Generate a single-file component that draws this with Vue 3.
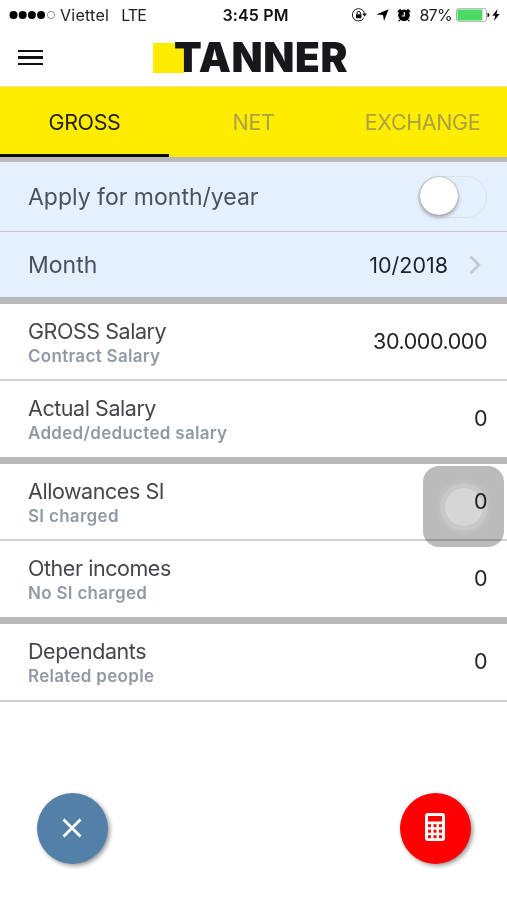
<template>
    <div class="screen">
        <div class="status">
            <div class="carrier">
                <svg class="signal" width="48" height="10" viewBox="0 0 48 10">
                    <circle v-for="n in 4" :key="n" :cx="n * 9.2 - 4.7" cy="5" r="4" fill="#000" />
                    <circle cx="42" cy="5" r="3.6" fill="none" stroke="#777" stroke-width=".8" />
                </svg>
                <span class="viettel">Viettel</span>
                <span class="lte">LTE</span>
            </div>
            <span class="time">3:45 PM</span>
            <div class="indicators">
                <svg width="17" height="16" viewBox="0 0 17 16">
                    <path d="M12.6 11.4A6.2 6.2 0 1 1 13.6 6.5" fill="none" stroke="#222" stroke-width="1" />
                    <path d="M11 6.5h5l-2.5 3z" fill="#111" />
                    <rect x="5" y="7.2" width="5.4" height="4" fill="#111" />
                    <path d="M6 7.5V6a1.7 1.7 0 0 1 3.4 0v1.5" fill="none" stroke="#111" stroke-width="1" />
                </svg>
                <svg class="arrow" width="13" height="12" viewBox="0 0 13 12">
                    <path d="M12.6.2 8 12 7 6 .4 5.6z" fill="#000" />
                </svg>
                <svg class="alarm" width="14" height="14" viewBox="0 0 14 14">
                    <circle cx="7" cy="7.3" r="5.8" fill="#000" />
                    <path d="M1 4 3.8 1.5M13 4 10.2 1.5M2.7 12 1.7 13M11.3 12l1 1" stroke="#000" stroke-width="1.7" />
                    <path d="M7.3 4v4H4.6" fill="none" stroke="#fff" stroke-width="1.2" />
                </svg>
                <span class="percent">87%</span>
                <svg class="battery" width="34" height="14" viewBox="0 0 34 14">
                    <rect x=".5" y=".7" width="30" height="12.6" rx="2" fill="#fff" stroke="#999" stroke-width=".8" />
                    <rect x="1.4" y="1.6" width="25" height="10.8" rx="1" fill="#4cd964" />
                    <path d="M31.5 4.7q2 .3 2 2.3t-2 2.3z" fill="#111" />
                </svg>
                <svg class="bolt" width="8" height="12" viewBox="0 0 8 12">
                    <path d="M5.6 0 .4 6.7h2.9L1.9 12l5.7-7H4.5z" fill="#000" />
                </svg>
            </div>
        </div>

        <header class="header">
            <button class="menu" aria-label="Menu">
                <span></span>
                <span></span>
                <span></span>
            </button>
            <div class="logo">TANNER</div>
        </header>

        <nav class="tabs">
            <button v-for="tab in tabs" :key="tab" class="tab" :class="{ active: tab === current }" @click="current = tab">
                {{ tab }}
            </button>
        </nav>

        <section class="period">
            <div class="row apply">
                <span class="caption">Apply for month/year</span>
                <button class="toggle" :class="{ on: applied }" aria-label="Apply" @click="applied = !applied">
                    <span class="knob"></span>
                </button>
            </div>
            <div class="row month">
                <span class="caption">Month</span>
                <span class="date">10/2018</span>
                <svg class="chevron" width="12" height="20" viewBox="0 0 12 20">
                    <path d="M1.5 1.5 10 10l-8.5 8.5" fill="none" stroke="#c3c8cd" stroke-width="2.6" />
                </svg>
            </div>
        </section>

        <section v-for="(group, i) in groups" :key="i" class="group">
            <div v-for="item in group" :key="item.title" class="row item">
                <div class="label">
                    <div class="title">{{ item.title }}</div>
                    <div class="sub">{{ item.sub }}</div>
                </div>
                <div class="value">{{ item.value }}</div>
            </div>
        </section>

        <div class="assistive"><span></span></div>

        <footer class="actions">
            <button class="fab clear" aria-label="Clear">
                <svg width="20" height="20" viewBox="0 0 20 20">
                    <path d="M1.5 1.5l17 17M18.5 1.5l-17 17" stroke="#fff" stroke-width="2.7" />
                </svg>
            </button>
            <button class="fab calc" aria-label="Calculate">
                <svg width="20" height="28" viewBox="0 0 20 28">
                    <rect width="20" height="28" rx="3" fill="#fff" />
                    <rect x="3" y="3" width="14" height="5.5" fill="#f00" />
                    <template v-for="y in 3" :key="y">
                        <rect v-for="x in 3" :key="x" :x="x * 5.5 - 2.5" :y="y * 5.5 + 5.7" width="3" height="3" fill="#f00" />
                    </template>
                </svg>
            </button>
        </footer>
    </div>
</template>

<script setup>
    import { ref } from 'vue';

    const tabs = ['GROSS', 'NET', 'EXCHANGE'];
    const current = ref('GROSS');
    const applied = ref(false);

    const groups = [
        [
            { title: 'GROSS Salary', sub: 'Contract Salary', value: '30.000.000' },
            { title: 'Actual Salary', sub: 'Added/deducted salary', value: '0' },
        ],
        [
            { title: 'Allowances SI', sub: 'SI charged', value: '0' },
            { title: 'Other incomes', sub: 'No SI charged', value: '0' },
        ],
        [
            { title: 'Dependants', sub: 'Related people', value: '0' },
        ],
    ];
</script>

<style>
    body {
        margin: 0;
        background: #fff;
    }
</style>

<style scoped>
    .screen {
        position: relative;
        display: flex;
        flex-direction: column;
        width: 507px;
        height: 900px;
        overflow: hidden;
        background: #fff;
        font-family: Inter, 'Liberation Sans', sans-serif;
        color: #222;
    }

    button {
        padding: 0;
        border: none;
        background: none;
        font-family: inherit;
        cursor: pointer;
    }

    svg {
        display: block;
        flex: none;
    }

    .status {
        display: grid;
        grid-template-columns: 1fr auto 1fr;
        align-items: center;
        height: 30px;
        padding: 0 7px 0 9px;
        font-size: 16px;
        white-space: nowrap;
    }

    .carrier,
    .indicators {
        display: flex;
        align-items: center;
    }

    .indicators {
        justify-content: flex-end;
    }

    .viettel {
        margin-left: 3px;
        letter-spacing: 0.25px;
    }

    .lte {
        margin-left: 12px;
        letter-spacing: -0.9px;
    }

    .time {
        padding-left: 2px;
        font-weight: 600;
        letter-spacing: 0.15px;
        color: #111;
    }

    .arrow {
        margin-left: 8px;
    }

    .alarm {
        margin-left: 8px;
    }

    .percent {
        margin-left: 8px;
        letter-spacing: -0.7px;
    }

    .battery {
        margin-left: 4px;
    }

    .bolt {
        margin-left: 2px;
    }

    .header {
        display: flex;
        align-items: center;
        height: 56px;
        padding-bottom: 1px;
        box-sizing: border-box;
    }

    .menu {
        display: flex;
        flex-direction: column;
        gap: 4.5px;
        width: 25px;
        margin-left: 18px;
    }

    .menu span {
        height: 2.2px;
        background: #111;
    }

    .logo {
        height: 30px;
        margin-left: 110px;
        padding-left: 21px;
        background: linear-gradient(#ffed00, #ffed00) no-repeat 0 0 / 31px 30px;
        font-weight: 900;
        font-size: 40.5px;
        line-height: 30px;
        letter-spacing: 0.6px;
        color: #18171b;
    }

    .tabs {
        display: flex;
        box-sizing: border-box;
        height: 71px;
        border-top: 1px solid #eee29a;
        background: #ffed00;
    }

    .tab {
        flex: 1;
        padding-top: 3px;
        border-bottom: 3px solid transparent;
        font-size: 21.5px;
        letter-spacing: -0.4px;
        color: #aaa044;
    }

    .tab.active {
        border-color: #0c0b00;
        color: #252200;
    }

    .period {
        border-top: 5px solid #bab8b8;
        background: #e4f0fe;
    }

    .row {
        display: flex;
        align-items: center;
        box-sizing: border-box;
        padding: 0 20px 0 28px;
    }

    .apply {
        height: 70px;
        border-bottom: 1px solid #bfc5cb;
    }

    .month {
        height: 65px;
    }

    .caption {
        flex: 1;
        font-size: 23px;
        color: #48525b;
    }

    .toggle {
        box-sizing: border-box;
        width: 69px;
        height: 42px;
        border: 1px solid #dfe2e2;
        border-radius: 21px;
    }

    .knob {
        display: block;
        width: 38px;
        height: 38px;
        margin: 0 1px 2px;
        border-radius: 50%;
        background: #fff;
        box-shadow: 0 2px 4px rgba(0, 0, 0, .35), 0 0 1px rgba(0, 0, 0, .5);
    }

    .toggle.on .knob {
        margin-left: 28px;
    }

    .date {
        font-size: 21.5px;
        color: #18232d;
    }

    .chevron {
        margin: 0 6px 0 21px;
    }

    .group {
        border-top: 7px solid #bababa;
    }

    .item {
        height: 76px;
    }

    .item:first-child {
        height: 77px;
        border-bottom: 2px solid #d0d0d0;
    }

    .item:only-child {
        height: 78px;
    }

    .label {
        flex: 1;
        padding-top: 2px;
    }

    .title {
        font-size: 21.5px;
        line-height: 26px;
        letter-spacing: -0.45px;
        color: #45474a;
    }

    .sub {
        font-size: 17px;
        font-weight: 600;
        line-height: 24px;
        letter-spacing: 0.3px;
        color: #919aa3;
    }

    .value {
        padding-bottom: 2px;
        font-size: 21.5px;
        letter-spacing: -0.45px;
        color: #242424;
    }

    .assistive {
        position: absolute;
        top: 466px;
        left: 423px;
        display: flex;
        align-items: center;
        justify-content: center;
        width: 81px;
        height: 81px;
        border-radius: 16px;
        background: rgba(120, 120, 120, .5);
        mix-blend-mode: multiply;
    }

    .assistive span {
        width: 38px;
        height: 38px;
        border-radius: 50%;
        background: rgba(255, 255, 255, .4);
        box-shadow: 0 0 0 5px rgba(255, 255, 255, .14), 0 0 0 9px rgba(255, 255, 255, .06);
    }

    .actions {
        display: flex;
        justify-content: space-between;
        margin-top: 91px;
        padding: 0 36px 0 37px;
    }

    .fab {
        display: flex;
        align-items: center;
        justify-content: center;
        box-sizing: border-box;
        width: 71px;
        height: 71px;
        border-radius: 50%;
        box-shadow: 2px 2px 4px rgba(0, 0, 0, .4);
    }

    .clear {
        padding: 0 1px 2px 0;
        background: #5280a7;
    }

    .calc {
        padding: 0 2px 4px 0;
        background: #f00;
    }
</style>
